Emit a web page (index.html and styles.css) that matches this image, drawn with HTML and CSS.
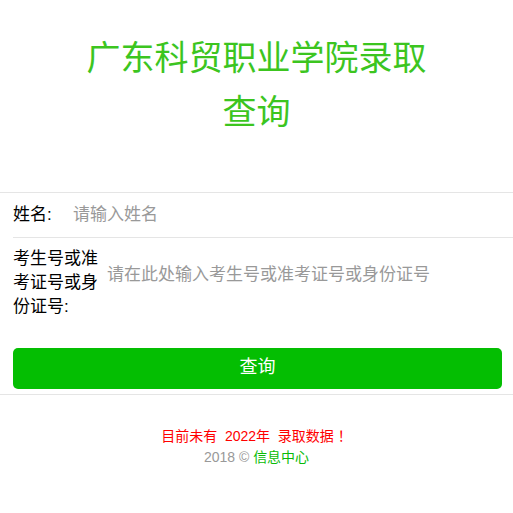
FILE: index.html
```html
<!DOCTYPE html>
<html>
<head>
  <title>广东科贸职业学院录取查询</title>
  <meta charset="utf-8">
  <meta name="viewport" content="width=device-width, initial-scale=1">
  <link rel="stylesheet" href="styles.css">
</head>
<body>
  <div class="page">
    <!-- Title -->
    <div class="page-hd">
      <h1 class="page-title">广东科贸职业学院录取查询</h1>
    </div>

    <!-- Query form -->
    <form class="cells">
      <div class="cell">
        <label class="cell-label label-short">姓名:</label>
        <input class="cell-input" type="text" placeholder="请输入姓名">
      </div>
      <div class="cell cell-border">
        <label class="cell-label label-long">考生号或准考证号或身份证号:</label>
        <input class="cell-input input-raised" type="text" placeholder="请在此处输入考生号或准考证号或身份证号">
      </div>
      <div class="btn-area">
        <button type="button" class="btn-primary">查询</button>
      </div>
    </form>

    <!-- Footer -->
    <div class="footer">
      <p class="notice">目前未有&nbsp;&nbsp;2022年&nbsp;&nbsp;录取数据<span class="bang">！</span></p>
      <p class="copyright">2018 &copy; <a href="#">信息中心</a></p>
    </div>
  </div>
</body>
</html>
```

FILE: styles.css
```css
/* Base */
html, body {
  margin: 0;
  padding: 0;
  background: #fff;
  color: #000;
  font-family: "Liberation Sans", "Noto Sans CJK SC", sans-serif;
}
/* Title */
.page-hd {
  padding: 31px 75px 0 75px;
}
.page-title {
  margin: 0;
  font-size: 34px;
  font-weight: normal;
  line-height: 54px;
  text-align: center;
  color: #3cc51f;
}
/* Form cells */
.cells {
  margin: 53px 0 0 0;
  border-top: 1px solid #e5e5e5;
  border-bottom: 1px solid #e5e5e5;
  font-size: 17px;
  line-height: 24px;
}
.cell {
  display: flex;
  align-items: center;
  padding: 10px 15px 10px 13px;
}
.cell-border {
  position: relative;
}
.cell-border::before {
  content: "";
  position: absolute;
  top: 0;
  left: 13px;
  right: 0;
  border-top: 1px solid #e5e5e5;
}
.cell-label {
  flex-shrink: 0;
}
.label-short {
  width: 60px;
}
.label-long {
  width: 94px;
}
.cell-input {
  flex: 1;
  min-width: 0;
  border: 0;
  outline: 0;
  padding: 0;
  background: transparent;
  font: inherit;
  font-size: 17px;
  height: 24px;
  line-height: 24px;
  color: #000;
}
.cell-input::placeholder {
  color: #999;
}
.input-raised {
  margin-bottom: 16px;
}
/* Button */
.btn-area {
  padding: 19px 11px 5px 13px;
}
.btn-primary {
  display: block;
  width: 100%;
  height: 41px;
  padding: 0 0 2px 0;
  border: 0;
  border-radius: 5px;
  background: #04be02;
  color: #fff;
  font-family: inherit;
  font-size: 18px;
  line-height: 39px;
  cursor: pointer;
}
.btn-primary:hover {
  background: #039702;
}
/* Footer */
.footer {
  margin-top: 31px;
  text-align: center;
  font-size: 14px;
  line-height: 21px;
}
.footer p {
  margin: 0;
}
.notice {
  color: #f00;
}
.bang {
  margin-left: 4px;
}
.copyright {
  color: #999;
}
.copyright a {
  color: #09bb07;
  text-decoration: none;
}
```
